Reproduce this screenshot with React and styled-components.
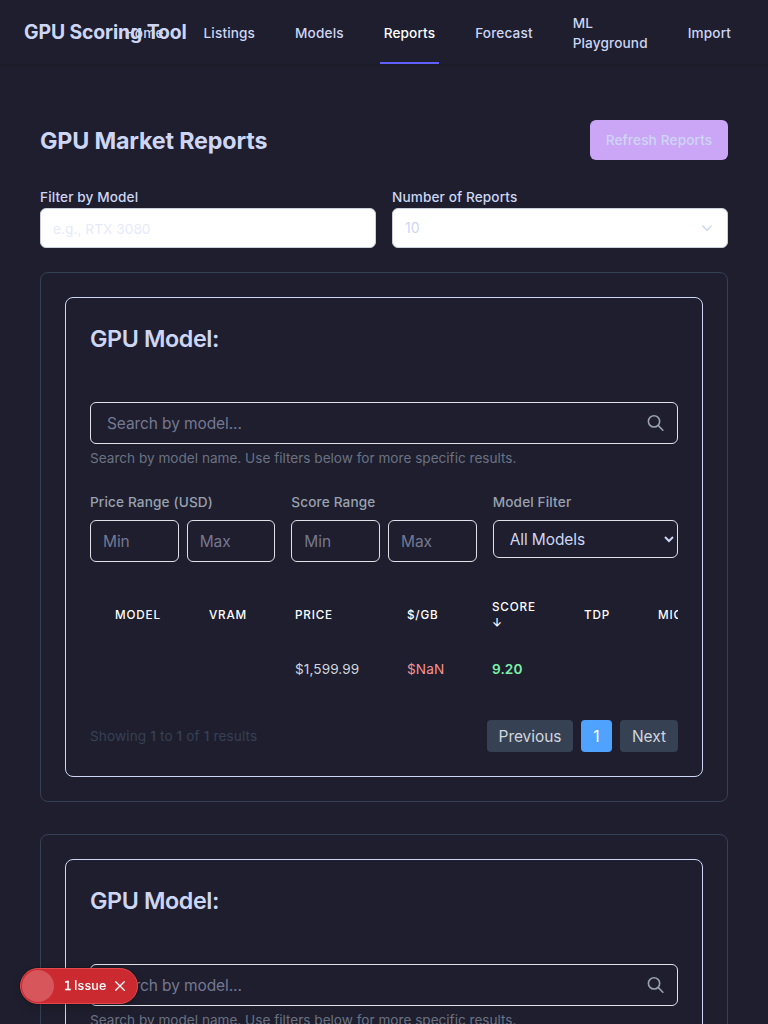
import React from "react";
import styled, { createGlobalStyle } from "styled-components";

const Global = createGlobalStyle`
  *, *::before, *::after { box-sizing: border-box; }
  html, body { margin: 0; height: 100%; overflow: hidden; background: #1e1e2e; }
  body { font-family: Inter, "Liberation Sans", sans-serif; font-size: 15.5px; line-height: 24px; letter-spacing: -0.1px; color: #cdd6f4; }
  h1, h2, p { margin: 0; }
  input, select, button { font: inherit; letter-spacing: inherit; margin: 0; color: inherit; }
`;

const Header = styled.header`
  display: flex;
  height: 64px;
  padding: 0 33px 0 24px;
  box-shadow: 0 1px 3px rgba(0, 0, 0, 0.14);
`;

const Brand = styled.div`
  flex: 0 0 64px;
  min-width: 0;
  align-self: center;
  white-space: nowrap;
  font-size: 19.4px;
  line-height: 28px;
  font-weight: 700;
  letter-spacing: -0.12px;
`;

const Nav = styled.nav`
  display: flex;
  flex: 1;
  min-width: 0;
  gap: 32px;
  margin-left: 32.6px;
`;

const NavLink = styled.a`
  display: flex;
  align-items: center;
  padding: 4px 4px 0;
  border-bottom: 2px solid ${(p) => (p.$active ? "#615fff" : "transparent")};
  color: ${(p) => (p.$active ? "#fff" : "#cdd6f4")};
  font-size: 13.6px;
  line-height: 20px;
  font-weight: 450;
  letter-spacing: 0.14px;
`;

const Main = styled.main`
  display: flex;
  flex-direction: column;
  padding: 56px 40px 0;
`;

const TitleRow = styled.div`
  display: flex;
  justify-content: space-between;
  align-items: center;
  margin-bottom: 27px;
`;

const PageTitle = styled.h1`
  padding-top: 2px;
  font-size: 23.3px;
  line-height: 32px;
  font-weight: 700;
  letter-spacing: -0.17px;
`;

const Refresh = styled.button`
  width: 138px;
  height: 40px;
  padding: 0;
  border: 0;
  border-radius: 6px;
  background: #cba6f7;
  font-size: 13.6px;
  font-weight: 450;
  letter-spacing: 0.15px;
`;

const TopFilters = styled.div`
  display: grid;
  grid-template-columns: 1fr 1fr;
  gap: 16px;
  margin-bottom: 24px;
`;

const TopLabel = styled.label`
  display: block;
  height: 21px;
  font-size: 13.6px;
  line-height: 20px;
  font-weight: 450;
  letter-spacing: 0.12px;
`;

const WhiteInput = styled.input`
  display: block;
  width: 100%;
  height: 40px;
  padding: 1px 12px 0;
  border: 1px solid #cbd0dc;
  border-radius: 6px;
  background: #fff;
  font-size: 13.6px;
  letter-spacing: 0.08px;
  &::placeholder { color: #e6eafa; opacity: 1; }
`;

const WhiteSelect = styled.div`
  display: flex;
  align-items: center;
  justify-content: space-between;
  height: 40px;
  padding: 0 13px 0 12px;
  border: 1px solid #cbd0dc;
  border-radius: 6px;
  background: #fff;
  font-size: 14px;
  letter-spacing: 0;
`;

const Reports = styled.div`
  display: flex;
  flex-direction: column;
  gap: 32px;
`;

const Outer = styled.section`
  padding: 24px;
  border: 1px solid #364153;
  border-radius: 8px;
`;

const Inner = styled.div`
  padding: 24px;
  border: 1px solid #cdd6f4;
  border-radius: 8px;
`;

const CardTitle = styled.h2`
  padding-top: 1px;
  margin-bottom: 47px;
  font-size: 23.3px;
  line-height: 32px;
  font-weight: 600;
  letter-spacing: -0.4px;
`;

const Field = styled.input`
  display: block;
  width: 100%;
  min-width: 0;
  height: 42px;
  padding: 0 12px;
  border: 1px solid #e0e1e8;
  border-radius: 6px;
  background: transparent;
  &::placeholder { color: #757891; opacity: 1; }
`;

const SearchBox = styled.div`
  display: flex;
  align-items: center;
  justify-content: space-between;
  height: 42px;
  padding: 0 11.5px 0 0;
  border: 1px solid #e0e1e8;
  border-radius: 6px;
`;

const SearchInput = styled(Field)`
  height: 40px;
  padding: 0 16px;
  border: 0;
`;

const Hint = styled.p`
  margin: 4px 0 24px;
  font-size: 13.6px;
  line-height: 20px;
  letter-spacing: 0;
  color: #6a7282;
`;

const Filters = styled.div`
  display: grid;
  grid-template-columns: repeat(3, minmax(0, 1fr));
  gap: 16px;
  margin-bottom: 24px;
`;

const Label = styled.label`
  display: block;
  margin-bottom: 8px;
  font-size: 13.6px;
  line-height: 20px;
  font-weight: 450;
  letter-spacing: 0.15px;
  color: #99a1af;
`;

const Pair = styled.div`
  display: flex;
  gap: 8px;
`;

const ModelSelect = styled.select`
  display: block;
  width: 100%;
  height: 38px;
  padding: 0 12px;
  border: 1px solid #e0e1e8;
  border-radius: 6px;
  background: transparent;
`;

const TableWrap = styled.div`
  overflow: hidden;
`;

const Table = styled.table`
  width: 668px;
  margin-left: 1px;
  table-layout: fixed;
  border-collapse: collapse;
  text-align: left;
`;

const Col = styled.col`
  width: ${(p) => p.$w}px;
`;

const Th = styled.th`
  height: 57px;
  padding: 12px 24px;
  color: #fff;
  font-size: 11.7px;
  line-height: 16px;
  font-weight: 450;
  letter-spacing: 0.82px;
  text-transform: uppercase;
`;

const Td = styled.td`
  height: 53px;
  padding: 15px 24px 17px;
  color: ${(p) => p.$color || "#d1d5dc"};
  font-size: 13.6px;
  line-height: 20px;
  font-weight: ${(p) => p.$weight || 400};
  letter-spacing: 0.1px;
  white-space: nowrap;
`;

const Footer = styled.div`
  display: flex;
  align-items: center;
  justify-content: space-between;
  margin-top: 24px;
  font-size: 13.6px;
  line-height: 20px;
  letter-spacing: 0.12px;
  color: #364153;
`;

const Strong = styled.span`
  font-weight: 500;
`;

const Pager = styled.div`
  display: flex;
  gap: 8px;
`;

const PageButton = styled.button`
  height: 32px;
  width: ${(p) => p.$w}px;
  padding: 2px 0 0;
  border: 0;
  border-radius: 4px;
  background: ${(p) => (p.$active ? "#50a2ff" : "#364153")};
  color: ${(p) => (p.$active ? "#fff" : "#d1d5dc")};
  font-size: 15.5px;
  line-height: 24px;
  letter-spacing: -0.05px;
`;

const Toast = styled.div`
  position: fixed;
  left: 20px;
  bottom: 20px;
  display: flex;
  align-items: center;
  width: 118px;
  height: 36px;
  padding-left: 1px;
  border: 1px solid #e5484d;
  border-radius: 18px;
  background: #ca2a30;
  box-shadow: 0 0 0 1px rgba(0, 0, 0, 0.17), 0 4px 8px rgba(0, 0, 0, 0.15);
  color: #fff;
  font-size: 12.6px;
  line-height: 16px;
  font-weight: 550;
  letter-spacing: 0.1px;
`;

const Dot = styled.span`
  width: 32px;
  height: 32px;
  margin-right: 10px;
  border-radius: 50%;
  background: #d7565b;
`;

const Count = styled.span`
  width: 10px;
  font-family: "DejaVu Sans", sans-serif;
  font-size: 12px;
  font-weight: 400;
  -webkit-text-stroke: 0.4px #fff;
`;

const ToastText = styled.span`
  width: 40px;
  white-space: nowrap;
`;

const links = ["Home", "Listings", "Models", "Reports", "Forecast", "ML Playground", "Import"];
const widths = [94, 86, 112, 85, 92, 74, 125];
const columns = ["Model", "VRAM", "Price", "$/GB", "Score ↓", "TDP", "MIG"];

function SearchIcon() {
  return (
    <svg width="20" height="20" viewBox="0 0 24 24" fill="none" stroke="#99a1af" strokeWidth="2" strokeLinecap="round" strokeLinejoin="round">
      <path d="M21 21l-6-6m2-5a7 7 0 11-14 0 7 7 0 0114 0z" />
    </svg>
  );
}

function ReportCard() {
  return (
    <Outer>
      <Inner>
        <CardTitle>GPU Model:</CardTitle>
        <SearchBox>
          <SearchInput placeholder="Search by model..." />
          <SearchIcon />
        </SearchBox>
        <Hint>Search by model name. Use filters below for more specific results.</Hint>
        <Filters>
          {["Price Range (USD)", "Score Range"].map((name) => (
            <div key={name}>
              <Label>{name}</Label>
              <Pair>
                <Field placeholder="Min" />
                <Field placeholder="Max" />
              </Pair>
            </div>
          ))}
          <div>
            <Label>Model Filter</Label>
            <ModelSelect>
              <option>All Models</option>
            </ModelSelect>
          </div>
        </Filters>
        <TableWrap>
          <Table>
            <colgroup>{widths.map((w, i) => <Col key={i} $w={w} />)}</colgroup>
            <thead>
              <tr>{columns.map((c) => <Th key={c}>{c}</Th>)}</tr>
            </thead>
            <tbody>
              <tr>
                <Td />
                <Td />
                <Td>$1,599.99</Td>
                <Td $color="#f59393">$NaN</Td>
                <Td $color="#7bf1a8" $weight={600}>9.20</Td>
                <Td />
                <Td />
              </tr>
            </tbody>
          </Table>
        </TableWrap>
        <Footer>
          <div>
            Showing <Strong>1</Strong> to <Strong>1</Strong> of <Strong>1</Strong> results
          </div>
          <Pager>
            <PageButton $w={86}>Previous</PageButton>
            <PageButton $w={31} $active>1</PageButton>
            <PageButton $w={58}>Next</PageButton>
          </Pager>
        </Footer>
      </Inner>
    </Outer>
  );
}

export default function App() {
  return (
    <>
      <Global />
      <Header>
        <Brand>GPU Scoring Tool</Brand>
        <Nav>
          {links.map((l) => <NavLink key={l} $active={l === "Reports"}>{l}</NavLink>)}
        </Nav>
      </Header>
      <Main>
        <TitleRow>
          <PageTitle>GPU Market Reports</PageTitle>
          <Refresh>Refresh Reports</Refresh>
        </TitleRow>
        <TopFilters>
          <div>
            <TopLabel>Filter by Model</TopLabel>
            <WhiteInput placeholder="e.g., RTX 3080" />
          </div>
          <div>
            <TopLabel>Number of Reports</TopLabel>
            <WhiteSelect>
              10
              <svg width="14" height="14" viewBox="0 0 14 14" fill="none" stroke="#cdd6f4" strokeWidth="1.5" strokeLinecap="round" strokeLinejoin="round">
                <path d="M2.8 5 7 9.2 11.2 5" />
              </svg>
            </WhiteSelect>
          </div>
        </TopFilters>
        <Reports>
          <ReportCard />
          <ReportCard />
        </Reports>
      </Main>
      <Toast>
        <Dot />
        <Count>1</Count>
        <ToastText>Issue</ToastText>
        <svg width="12" height="12" viewBox="0 0 12 12" fill="none" stroke="#fff" strokeWidth="1.3" strokeLinecap="round">
          <path d="M1.7 1.7 10.3 10.3M10.3 1.7 1.7 10.3" />
        </svg>
      </Toast>
    </>
  );
}
